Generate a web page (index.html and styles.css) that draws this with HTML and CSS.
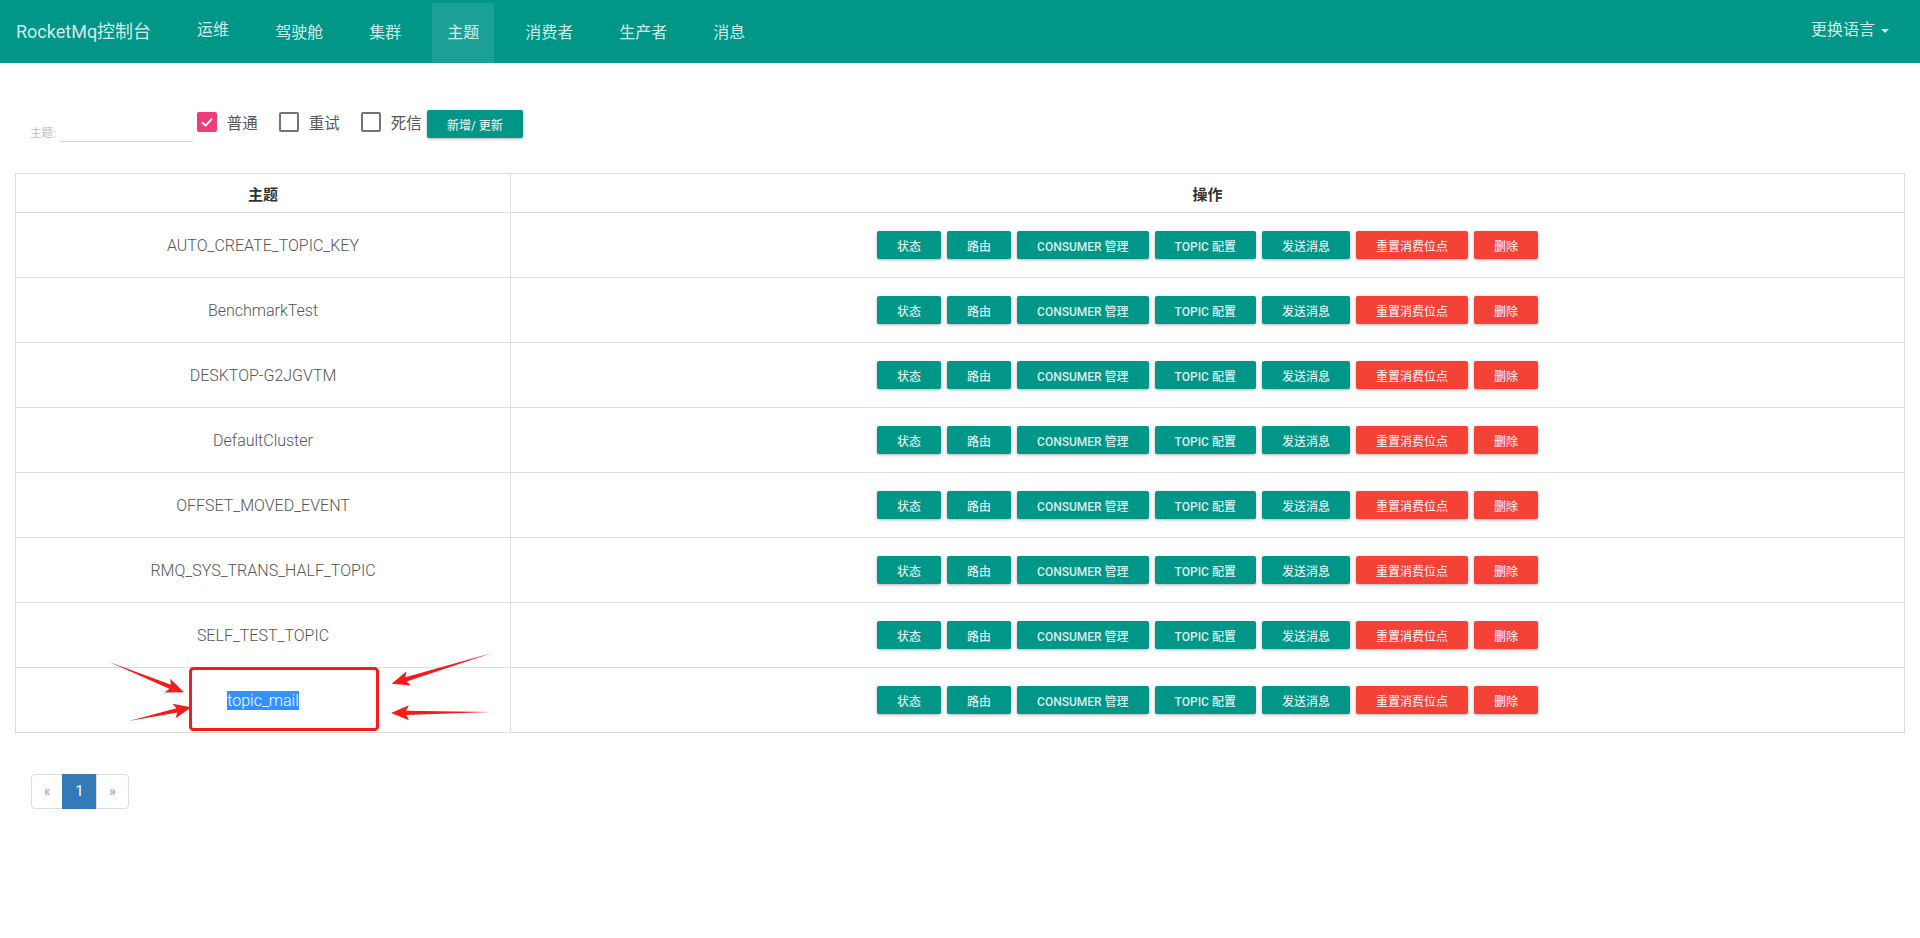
FILE: index.html
```html
<!DOCTYPE html>
<html lang="zh-CN">
<head>
<meta charset="utf-8">
<title>RocketMq控制台</title>
<link rel="stylesheet" href="styles.css">
</head>
<body>
<header class="navbar">
  <div class="brand">RocketMq控制台</div>
  <ul class="nav">
    <li class="dropdown"><a>运维</a></li>
    <li><a>驾驶舱</a></li>
    <li><a>集群</a></li>
    <li class="active"><a>主题</a></li>
    <li><a>消费者</a></li>
    <li><a>生产者</a></li>
    <li><a>消息</a></li>
  </ul>
  <ul class="nav nav-right">
    <li class="dropdown"><a>更换语言 <span class="caret"></span></a></li>
  </ul>
</header>

<main class="container">
  <form class="filter">
    <div class="field">
      <label class="field-label">主题:</label>
      <span class="field-input"></span>
    </div>
    <div class="checks">
      <span class="box checked"><svg viewBox="0 0 20 20" width="20" height="20"><path d="M5 10.2 L8.6 13.6 L15 6.6" fill="none" stroke="#fff" stroke-width="2"/></svg></span>
      <span class="check-text">普通</span>
      <span class="box"></span>
      <span class="check-text">重试</span>
      <span class="box"></span>
      <span class="check-text last">死信</span>
      <span class="btn btn-raised">新增/ 更新</span>
    </div>
  </form>

  <table class="topics">
    <colgroup><col class="col-topic"><col></colgroup>
    <thead>
      <tr><th>主题</th><th>操作</th></tr>
    </thead>
    <tbody>
      <tr><td class="name">AUTO_CREATE_TOPIC_KEY</td><td><div class="ops"><span class="btn">状态</span><span class="btn">路由</span><span class="btn">CONSUMER 管理</span><span class="btn">TOPIC 配置</span><span class="btn">发送消息</span><span class="btn btn-red">重置消费位点</span><span class="btn btn-red">删除</span></div></td></tr>
      <tr><td class="name">BenchmarkTest</td><td><div class="ops"><span class="btn">状态</span><span class="btn">路由</span><span class="btn">CONSUMER 管理</span><span class="btn">TOPIC 配置</span><span class="btn">发送消息</span><span class="btn btn-red">重置消费位点</span><span class="btn btn-red">删除</span></div></td></tr>
      <tr><td class="name">DESKTOP-G2JGVTM</td><td><div class="ops"><span class="btn">状态</span><span class="btn">路由</span><span class="btn">CONSUMER 管理</span><span class="btn">TOPIC 配置</span><span class="btn">发送消息</span><span class="btn btn-red">重置消费位点</span><span class="btn btn-red">删除</span></div></td></tr>
      <tr><td class="name">DefaultCluster</td><td><div class="ops"><span class="btn">状态</span><span class="btn">路由</span><span class="btn">CONSUMER 管理</span><span class="btn">TOPIC 配置</span><span class="btn">发送消息</span><span class="btn btn-red">重置消费位点</span><span class="btn btn-red">删除</span></div></td></tr>
      <tr><td class="name">OFFSET_MOVED_EVENT</td><td><div class="ops"><span class="btn">状态</span><span class="btn">路由</span><span class="btn">CONSUMER 管理</span><span class="btn">TOPIC 配置</span><span class="btn">发送消息</span><span class="btn btn-red">重置消费位点</span><span class="btn btn-red">删除</span></div></td></tr>
      <tr><td class="name">RMQ_SYS_TRANS_HALF_TOPIC</td><td><div class="ops"><span class="btn">状态</span><span class="btn">路由</span><span class="btn">CONSUMER 管理</span><span class="btn">TOPIC 配置</span><span class="btn">发送消息</span><span class="btn btn-red">重置消费位点</span><span class="btn btn-red">删除</span></div></td></tr>
      <tr><td class="name">SELF_TEST_TOPIC</td><td><div class="ops"><span class="btn">状态</span><span class="btn">路由</span><span class="btn">CONSUMER 管理</span><span class="btn">TOPIC 配置</span><span class="btn">发送消息</span><span class="btn btn-red">重置消费位点</span><span class="btn btn-red">删除</span></div></td></tr>
      <tr><td class="name"><span class="selected">topic_mail</span></td><td><div class="ops"><span class="btn">状态</span><span class="btn">路由</span><span class="btn">CONSUMER 管理</span><span class="btn">TOPIC 配置</span><span class="btn">发送消息</span><span class="btn btn-red">重置消费位点</span><span class="btn btn-red">删除</span></div></td></tr>
    </tbody>
  </table>

  <ul class="pagination">
    <li class="pg-prev"><a>«</a></li>
    <li class="pg-active"><a>1</a></li>
    <li class="pg-next"><a>»</a></li>
  </ul>
</main>

<svg class="annotations" width="1920" height="938" viewBox="0 0 1920 938">
  <rect x="190.5" y="668.5" width="187" height="61" rx="3" ry="3" fill="none" stroke="#f41b1b" stroke-width="3"/>
  <g fill="#f41b1b">
    <polygon transform="translate(109,662) rotate(22)" points="0,0 66,-2.2 63,-7.5 81,0 63,7.5 66,2.2"/>
    <polygon transform="translate(129,721) rotate(-12.5)" points="0,0 49,-2.2 46,-7.5 64,0 46,7.5 49,2.2"/>
    <polygon transform="translate(492,653) rotate(163)" points="0,0 90,-2.2 87,-7.5 105,0 87,7.5 90,2.2"/>
    <polygon transform="translate(491,712) rotate(179.4)" points="0,0 85,-2.2 82,-7.5 100,0 82,7.5 85,2.2"/>
  </g>
</svg>
</body>
</html>
```

FILE: styles.css
```css
* { box-sizing: border-box; }

html, body {
  margin: 0;
  padding: 0;
  background: #fff;
}

body {
  font-family: Roboto, "Noto Sans CJK SC", "Noto Sans", sans-serif;
  font-size: 14px;
  color: #555;
  position: relative;
  min-height: 938px;
}

/* ---------- navbar ---------- */
.navbar {
  display: flex;
  align-items: flex-start;
  height: 63px;
  background: #009688;
  padding: 0 16px 0 16px;
  color: rgba(255, 255, 255, 0.84);
}

.brand {
  font-size: 18px;
  line-height: 63px;
  margin-right: 31px;
  white-space: nowrap;
}

.nav {
  display: flex;
  gap: 16px;
  list-style: none;
  margin: 3px 0 0 0;
  padding: 0;
}

.nav li a {
  display: block;
  height: 60px;
  line-height: 60px;
  padding: 0 15px;
  font-size: 16px;
  white-space: nowrap;
}

.nav li.dropdown a {
  line-height: 54px;
}

.nav li.active {
  background: rgba(255, 255, 255, 0.1);
}

.nav-right {
  margin-left: auto;
}

.caret {
  display: inline-block;
  width: 0;
  height: 0;
  margin-left: 2px;
  vertical-align: middle;
  border-top: 4px solid rgba(255, 255, 255, 0.84);
  border-left: 4px solid transparent;
  border-right: 4px solid transparent;
}

/* ---------- content ---------- */
.container {
  padding: 0 15px;
}

.filter {
  display: flex;
  align-items: flex-start;
  margin: 47px 0 0 15px;
}

.field {
  display: flex;
  align-items: flex-end;
  height: 32px;
  gap: 4px;
  margin-right: 4px;
}

.field-label {
  font-size: 11.5px;
  line-height: 14px;
  color: #bdbdbd;
  margin-bottom: 2px;
}

.field-input {
  display: block;
  width: 133px;
  height: 24px;
  border-bottom: 1px solid #d2d2d2;
}

.checks {
  display: flex;
  align-items: center;
  height: 28px;
}

.box {
  display: block;
  width: 20px;
  height: 20px;
  border: 2px solid #737373;
  border-radius: 2px;
  margin-top: -4px;
}

.box.checked {
  border: none;
  background: #ec3c79;
}

.box svg { display: block; }

.check-text {
  font-size: 15.5px;
  color: #555;
  margin: -4px 21px 0 10px;
  white-space: nowrap;
}

.check-text.last {
  margin-right: 5px;
}

.btn {
  display: inline-flex;
  align-items: center;
  justify-content: center;
  height: 28px;
  padding: 0 20px;
  border-radius: 2px;
  background: #009688;
  color: rgba(255, 255, 255, 0.86);
  font-size: 12px;
  font-weight: 500;
  text-transform: uppercase;
  white-space: nowrap;
  box-shadow: 0 1px 4px rgba(0, 0, 0, 0.18), 0 1px 2px rgba(0, 0, 0, 0.14);
}

.btn-raised {
  width: 96px;
  padding: 0;
}

.btn-red {
  background: #f44336;
}

/* ---------- table ---------- */
.topics {
  width: 100%;
  margin-top: 31px;
  border-collapse: collapse;
  table-layout: fixed;
  border: 1px solid #ddd;
}

.col-topic { width: 495px; }

.topics th {
  height: 39px;
  padding: 0 8px;
  border: 1px solid #ddd;
  font-size: 15px;
  font-weight: bold;
  color: #333;
  text-align: center;
  vertical-align: middle;
}

.topics td {
  height: 65px;
  padding: 0 8px;
  border: 1px solid #ddd;
  text-align: center;
  vertical-align: middle;
}

.topics td.name {
  font-size: 16px;
  font-weight: 300;
  color: #555;
}

.ops {
  display: flex;
  justify-content: center;
  gap: 6px;
}

.selected {
  background: #3390ff;
  color: #fff;
  font-size: 16px;
  line-height: 19px;
  display: inline-block;
}

/* ---------- pagination ---------- */
.pagination {
  display: flex;
  list-style: none;
  margin: 41px 0 0 16px;
  padding: 0;
}

.pagination li a {
  display: block;
  height: 35px;
  line-height: 33px;
  border: 1px solid #ddd;
  text-align: center;
  font-size: 14px;
  color: #99a;
}

.pg-prev a {
  width: 32px;
  border-radius: 4px 0 0 4px;
}

.pg-active a {
  width: 35px;
  margin-left: -1px;
  background: #337ab7;
  border-color: #337ab7 !important;
  color: #fff !important;
  font-size: 15px !important;
}

.pg-next a {
  width: 33px;
  margin-left: -1px;
  border-radius: 0 4px 4px 0;
}

/* ---------- annotation overlay ---------- */
.annotations {
  position: absolute;
  top: 0;
  left: 0;
  pointer-events: none;
}
```
